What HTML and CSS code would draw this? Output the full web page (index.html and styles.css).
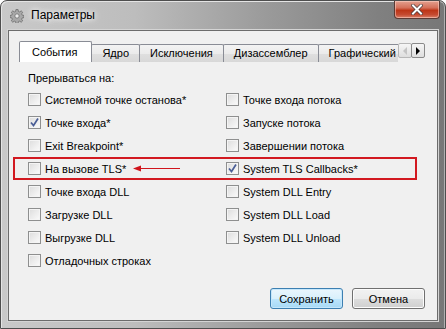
FILE: index.html
```html
<!DOCTYPE html>
<html lang="ru">
<head>
  <meta charset="UTF-8">
  <meta name="viewport" content="width=device-width, initial-scale=1.0">
  <title>Параметры</title>
  <link rel="stylesheet" href="styles.css">
</head>
<body>

  <!-- Окно настроек -->
  <div class="window">

    <!-- Заголовок -->
    <div class="titlebar">
      <svg class="app-icon" width="14" height="14" viewBox="0 0 13 13">
        <g fill="#a8a8a8" stroke="#5e5e5e" stroke-width="0.6">
          <path d="M5.5 0.5h2l0.3 1.7 1.2 0.5 1.4-1 1.4 1.4-1 1.4 0.5 1.2 1.7 0.3v2l-1.7 0.3-0.5 1.2 1 1.4-1.4 1.4-1.4-1-1.2 0.5-0.3 1.7h-2l-0.3-1.7-1.2-0.5-1.4 1-1.4-1.4 1-1.4-0.5-1.2-1.7-0.3v-2l1.7-0.3 0.5-1.2-1-1.4 1.4-1.4 1.4 1 1.2-0.5z"/>
        </g>
        <circle cx="6.5" cy="6.5" r="2" fill="#ececec" stroke="#5e5e5e" stroke-width="0.6"/>
      </svg>
      <span class="title">Параметры</span>
      <div class="close">
        <svg width="12" height="11" viewBox="0 0 12 11">
          <path d="M2 1.5 L10 9.5 M10 1.5 L2 9.5" stroke="#4a3a3a" stroke-width="3.4" stroke-linecap="square"/>
          <path d="M2 1.5 L10 9.5 M10 1.5 L2 9.5" stroke="#ffffff" stroke-width="2" stroke-linecap="square"/>
        </svg>
      </div>
    </div>

    <!-- Клиентская область -->
    <div class="client">

      <div class="tabstrip">
        <div class="tablist">
          <div class="tab active">События</div>
          <div class="tab">Ядро</div>
          <div class="tab">Исключения</div>
          <div class="tab">Дизассемблер</div>
          <div class="tab">Графический</div>
        </div>
        <div class="tabscroll">
          <div class="scrollbtn disabled">
            <svg width="5" height="8" viewBox="0 0 5 8"><path d="M4 0 L0 4 L4 8z" fill="#c4c4c4"/></svg>
          </div>
          <div class="scrollbtn">
            <svg width="5" height="8" viewBox="0 0 5 8"><path d="M0 0 L4 4 L0 8z" fill="#000"/></svg>
          </div>
        </div>
      </div>

      <div class="panel">
        <div class="caption">Прерываться на:</div>

        <div class="row">
          <label class="cell"><span class="box"></span>Системной точке останова*</label>
          <label class="cell"><span class="box"></span>Точке входа потока</label>
        </div>
        <div class="row">
          <label class="cell"><span class="box checked"><svg width="11" height="11" viewBox="0 0 11 11"><path d="M2 5.5 L4.5 8.5 L9 1.5" fill="none" stroke="#4a5e96" stroke-width="1.7"/></svg></span>Точке входа*</label>
          <label class="cell"><span class="box"></span>Запуске потока</label>
        </div>
        <div class="row">
          <label class="cell"><span class="box"></span>Exit Breakpoint*</label>
          <label class="cell"><span class="box"></span>Завершении потока</label>
        </div>
        <div class="row marked">
          <label class="cell"><span class="box"></span>На вызове TLS*
            <svg class="arrow" width="48" height="7" viewBox="0 0 48 7">
              <path d="M0 3.5 L8 0.5 L8 6.5z" fill="#d0141c"/>
              <path d="M6 3.5 H47" stroke="#d0141c" stroke-width="1.2"/>
            </svg>
          </label>
          <label class="cell"><span class="box checked"><svg width="11" height="11" viewBox="0 0 11 11"><path d="M2 5.5 L4.5 8.5 L9 1.5" fill="none" stroke="#4a5e96" stroke-width="1.7"/></svg></span>System TLS Callbacks*</label>
        </div>
        <div class="row">
          <label class="cell"><span class="box"></span>Точке входа DLL</label>
          <label class="cell"><span class="box"></span>System DLL Entry</label>
        </div>
        <div class="row">
          <label class="cell"><span class="box"></span>Загрузке DLL</label>
          <label class="cell"><span class="box"></span>System DLL Load</label>
        </div>
        <div class="row">
          <label class="cell"><span class="box"></span>Выгрузке DLL</label>
          <label class="cell"><span class="box"></span>System DLL Unload</label>
        </div>
        <div class="row">
          <label class="cell"><span class="box"></span>Отладочных строках</label>
        </div>
      </div>

      <div class="buttons">
        <button class="btn default">Сохранить</button>
        <button class="btn">Отмена</button>
      </div>

    </div>
  </div>

</body>
</html>
```

FILE: styles.css
```css
/* Основа */
body {
  margin: 0;
  padding: 0;
  background: #ffffff;
  font-family: "Liberation Sans", Arial, sans-serif;
  font-size: 11px;
  color: #000;
}

/* Рамка окна */
.window {
  box-sizing: border-box;
  width: 446px;
  height: 329px;
  display: flex;
  flex-direction: column;
  border: 1px solid #4e4e4e;
  border-radius: 7px 7px 0 0;
  background: linear-gradient(to right, #c9c9c9 0%, #bdbdbd 30%, #9a9a9a 60%, #808080 85%, #777777 100%);
  box-shadow: inset 1px 1px 0 #e4e4e4, inset -1px 0 0 #b0b0b0;
}

/* Заголовок */
.titlebar {
  height: 29px;
  display: flex;
  align-items: flex-start;
  flex-shrink: 0;
}

.app-icon {
  margin: 8px 0 0 9px;
}

.title {
  margin: 7px 0 0 7px;
  font-size: 12px;
  color: #000;
  text-shadow: 0 0 5px #ffffff, 0 0 8px rgba(255, 255, 255, 0.8);
}

.close {
  margin-left: auto;
  margin-right: 5px;
  width: 44px;
  height: 17px;
  display: flex;
  align-items: center;
  justify-content: center;
  border: 1px solid #5b3a34;
  border-top: none;
  border-radius: 0 0 4px 4px;
  background: linear-gradient(to bottom, #e3a08f 0%, #d4705a 40%, #bd3517 55%, #c54a30 80%, #d98068 100%);
  box-shadow: inset 0 0 0 1px rgba(255, 220, 210, 0.5);
}

/* Клиентская область */
.client {
  flex: 1;
  margin: 0 7px 7px;
  display: flex;
  flex-direction: column;
  background: #f0f0f0;
  border: 1px solid #6c6c6c;
  box-shadow: 0 0 0 1px #d4d4d4;
}

/* Вкладки */
.tabstrip {
  display: flex;
  align-items: flex-end;
  padding: 10px 12px 0 10px;
  height: 21px;
}

.tablist {
  flex: 1;
  display: flex;
  align-items: flex-end;
  overflow: hidden;
  white-space: nowrap;
  height: 21px;
}

.tab {
  height: 17px;
  line-height: 17px;
  padding: 0 10px;
  margin-left: -1px;
  border: 1px solid #898c95;
  border-bottom: none;
  border-radius: 2px 2px 0 0;
  background: linear-gradient(to bottom, #f3f3f3 0%, #ebebeb 50%, #dfdfdf 51%, #d8d8d8 100%);
  flex-shrink: 0;
}

.tab.active {
  height: 20px;
  line-height: 20px;
  margin-left: 0;
  padding: 0 14px 0 12px;
  background: #ffffff;
  position: relative;
  z-index: 1;
}

.tabscroll {
  display: flex;
  align-self: flex-start;
  margin-top: 2px;
}

.scrollbtn {
  box-sizing: border-box;
  width: 14px;
  height: 15px;
  display: flex;
  align-items: center;
  justify-content: center;
  border: 1px solid #8a8a8a;
  border-radius: 2px;
  background: linear-gradient(to bottom, #f6f6f6, #dedede);
}

.scrollbtn + .scrollbtn {
  margin-left: -1px;
}

.scrollbtn.disabled {
  border-color: #b7b7b7;
}

/* Содержимое вкладки */
.panel {
  padding: 9px 0 0 4px;
}

.caption {
  margin-left: 15px;
  line-height: 14px;
  margin-bottom: 3px;
}

.row {
  box-sizing: border-box;
  width: 404px;
  height: 23px;
  display: flex;
  align-items: center;
  padding-left: 13px;
  border: 2px solid transparent;
}

.row.marked {
  border-color: #d21920;
}

.cell {
  display: flex;
  align-items: center;
  white-space: nowrap;
}

.cell:first-child {
  flex: 0 0 198px;
}

.box {
  box-sizing: border-box;
  width: 13px;
  height: 13px;
  margin-right: 4px;
  flex-shrink: 0;
  display: flex;
  align-items: center;
  justify-content: center;
  border: 1px solid #8e8f8f;
  background: linear-gradient(135deg, #dcdcdc 0%, #ececec 50%, #fbfbfb 100%);
  box-shadow: inset 0 0 0 1px #f4f4f4;
}

.arrow {
  margin-left: 7px;
}

/* Кнопки */
.buttons {
  margin-top: auto;
  display: flex;
  justify-content: flex-end;
  gap: 9px;
  padding: 0 12px 11px 0;
}

.btn {
  box-sizing: border-box;
  width: 73px;
  height: 21px;
  padding: 0;
  font-family: "Liberation Sans", Arial, sans-serif;
  font-size: 11px;
  color: #000;
  border: 1px solid #707070;
  border-radius: 3px;
  background: linear-gradient(to bottom, #f2f2f2 0%, #ebebeb 50%, #dddddd 51%, #cfcfcf 100%);
  box-shadow: inset 0 0 0 1px #fcfcfc;
}

.btn.default {
  border-color: #3c7fb1;
  background: linear-gradient(to bottom, #eaf6fd 0%, #d9f0fc 50%, #bee6fd 51%, #a7d9f5 100%);
  box-shadow: inset 0 0 0 1px #c6e7fb;
}
```
